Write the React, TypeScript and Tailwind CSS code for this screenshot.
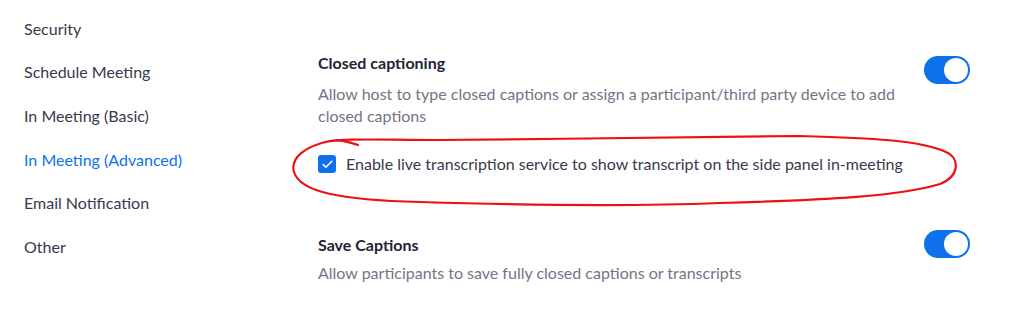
import { Check } from "lucide-react";

const navItems = [
  { label: "Security" },
  { label: "Schedule Meeting" },
  { label: "In Meeting (Basic)" },
  { label: "In Meeting (Advanced)", active: true },
  { label: "Email Notification" },
  { label: "Other" },
];

const Toggle = () => (
  <div className="w-[46px] h-[28px] rounded-full bg-[#0e71eb] flex items-center justify-end pr-[2px] shrink-0">
    <div className="w-[24px] h-[24px] rounded-full bg-white" />
  </div>
);

const App = () => {
  return (
    <div
      className="relative w-[1024px] h-[313px] bg-white overflow-hidden flex"
      style={{ fontFamily: "Lato, 'Open Sans', sans-serif" }}
    >
      {/* Left nav */}
      <nav className="w-[318px] shrink-0 pl-6 pt-[7px]">
        {navItems.map((item) => (
          <div
            key={item.label}
            className={`h-[43.6px] flex items-center text-[16px] ${
              item.active ? "text-[#0e71eb]" : "text-[#39394d]"
            }`}
          >
            {item.label}
          </div>
        ))}
      </nav>

      {/* Settings */}
      <main className="flex-1 pr-[54px] pt-[52px]">
        <div className="flex justify-between items-start">
          <div className="w-[590px]">
            <div className="h-[22px] leading-[22px] text-[16px] font-bold text-[#232333]">
              Closed captioning
            </div>
            <p className="mt-[9px] text-[16px] leading-[22px] text-[#747487]">
              Allow host to type closed captions or assign a participant/third party device to add closed captions
            </p>
          </div>
          <div className="mt-[4px]">
            <Toggle />
          </div>
        </div>

        <label className="mt-[28px] flex items-center gap-[10px] h-[18px]">
          <span className="w-[18px] h-[18px] rounded-[3px] bg-[#0e71eb] flex items-center justify-center">
            <Check className="w-[13px] h-[13px] text-white" strokeWidth={3} />
          </span>
          <span className="text-[16px] text-[#39394d]">
            Enable live transcription service to show transcript on the side panel in-meeting
          </span>
        </label>

        <div className="mt-[61px] flex justify-between items-start">
          <div>
            <div className="h-[22px] leading-[22px] text-[16px] font-bold text-[#232333]">
              Save Captions
            </div>
            <p className="mt-[6px] text-[16px] leading-[22px] text-[#747487]">
              Allow participants to save fully closed captions or transcripts
            </p>
          </div>
          <div className="-mt-[4px]">
            <Toggle />
          </div>
        </div>
      </main>

      {/* Red hand-drawn annotation */}
      <svg
        className="absolute inset-0 pointer-events-none"
        width="1024"
        height="313"
        viewBox="0 0 1024 313"
      >
        <path
          d="M358 145 C 348 142, 340 139, 330 141 C 305 146, 290 158, 294 172 C 300 192, 340 200, 420 202 C 520 205, 620 207, 720 203 C 830 200, 900 196, 940 184 C 960 176, 960 158, 946 152 C 920 140, 870 138, 800 136 C 700 137, 560 139, 440 140 C 380 140, 345 138, 325 142"
          fill="none"
          stroke="#ee1111"
          strokeWidth="2.2"
          strokeLinecap="round"
        />
      </svg>
    </div>
  );
};

export default App;
